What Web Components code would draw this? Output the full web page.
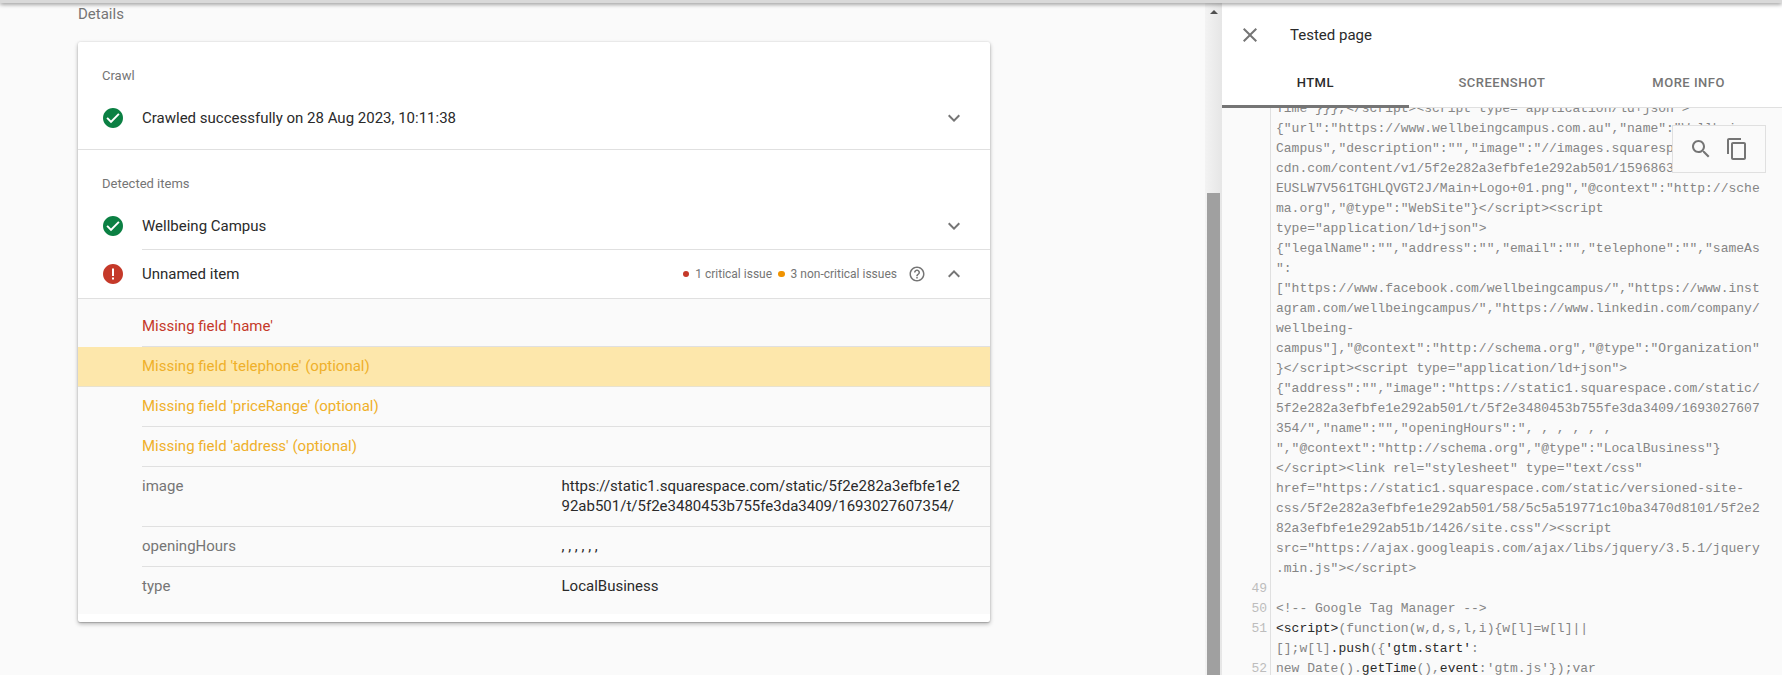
<!DOCTYPE html>
<html lang="en">
<head>
<meta charset="UTF-8">
<title>Tested page</title>
<style>
  html, body { margin: 0; height: 100%; overflow: hidden; }
  body { font-family: Roboto, "Liberation Sans", sans-serif; font-size: 15px; background: #fafafa; color: #2a2a2a; }
</style>
</head>
<body>

<result-app>
  <result-card slot="main">
    <card-section title="Crawl" divider>
      <status-row state="ok">Crawled successfully on 28 Aug 2023, 10:11:38</status-row>
    </card-section>
    <card-section title="Detected items">
      <status-row state="ok" inset>Wellbeing Campus</status-row>
      <status-row state="error" open>Unnamed item
        <issue-summary slot="meta"></issue-summary>
      </status-row>
    </card-section>
    <detail-list>
      <issue-row level="error" first>Missing field 'name'</issue-row>
      <issue-row level="warn" selected>Missing field 'telephone' (optional)</issue-row>
      <issue-row level="warn">Missing field 'priceRange' (optional)</issue-row>
      <issue-row level="warn">Missing field 'address' (optional)</issue-row>
      <detail-row label="image">https://static1.squarespace.com/static/5f2e282a3efbfe1e292ab501/t/5f2e3480453b755fe3da3409/1693027607354/</detail-row>
      <detail-row label="openingHours">, , , , , ,</detail-row>
      <detail-row label="type" last>LocalBusiness</detail-row>
    </detail-list>
  </result-card>
  <side-panel slot="side" heading="Tested page">
    <code-view></code-view>
  </side-panel>
</result-app>

<script>
  const ICONS = {
    down: '<path d="M7.41 8.59 12 13.17l4.59-4.58L18 10l-6 6-6-6z"/>',
    up: '<path d="M7.41 15.41 12 10.83l4.59 4.58L18 14l-6-6-6 6z"/>',
    close: '<path d="M19 6.41 17.59 5 12 10.59 6.41 5 5 6.41 10.59 12 5 17.59 6.41 19 12 13.41 17.59 19 19 17.59 13.41 12z"/>',
    search: '<path d="M15.5 14h-.79l-.28-.27C15.41 12.59 16 11.11 16 9.5 16 5.91 13.09 3 9.5 3S3 5.91 3 9.5 5.91 16 9.5 16c1.61 0 3.09-.59 4.23-1.57l.27.28v.79l5 4.99L20.49 19l-4.99-5zm-6 0C7.01 14 5 11.99 5 9.5S7.01 5 9.5 5 14 7.01 14 9.5 11.99 14 9.5 14z"/>',
    copy: '<path d="M16 1H4c-1.1 0-2 .9-2 2v14h2V3h12V1zm3 4H8c-1.1 0-2 .9-2 2v14c0 1.1.9 2 2 2h11c1.1 0 2-.9 2-2V7c0-1.1-.9-2-2-2zm0 16H8V7h11v14z"/>',
    help: '<path d="M11 18h2v-2h-2v2zm1-16C6.48 2 2 6.48 2 12s4.48 10 10 10 10-4.48 10-10S17.52 2 12 2zm0 18c-4.41 0-8-3.59-8-8s3.59-8 8-8 8 3.59 8 8-3.59 8-8 8zm0-14c-2.21 0-4 1.79-4 4h2c0-1.1.9-2 2-2s2 .9 2 2c0 2-3 1.75-3 5h2c0-2.25 3-2.5 3-5 0-2.21-1.79-4-4-4z"/>',
    ok: '<path fill="#0b8043" d="M12 2C6.48 2 2 6.48 2 12s4.48 10 10 10 10-4.48 10-10S17.52 2 12 2z"/><path fill="#fff" d="m10 17.2-4.6-4.6L6.8 11.2l3.2 3.2 7.2-7.2 1.4 1.4z"/>',
    error: '<path fill="#c53929" d="M12 2C6.48 2 2 6.48 2 12s4.48 10 10 10 10-4.48 10-10S17.52 2 12 2z"/><path fill="#fff" d="M11 6.5h2v7.5h-2zM11 15.5h2v2h-2z"/>'
  }

  function svg(name, size) {
    return `<svg width="${size}" height="${size}" viewBox="0 0 24 24" fill="#757575">${ICONS[name]}</svg>`
  }

  // small helper, every element below is just a shadow root with its own style
  function define(tag, render) {
    customElements.define(tag, class extends HTMLElement {
      connectedCallback() {
        if (this.shadowRoot) return
        this.attachShadow({ mode: 'open' }).innerHTML = render(this)
      }
    })
  }

  define('result-app', () => `
    <style>
      :host { display: flex; height: 675px; position: relative; overflow: hidden; }
      .top { position: absolute; left: 0; right: 0; top: 0; height: 3px; background: #d9d9d9; box-shadow: 0 1px 4px rgba(0,0,0,.55); z-index: 5; }
      main { width: 1205px; box-sizing: border-box; padding: 3px 0 0 78px; flex: none; }
      .title { height: 39px; font-size: 15px; line-height: 22px; color: #757575; }
      .bar { width: 17px; flex: none; box-sizing: border-box; padding: 3px 2px 0; display: flex; flex-direction: column; background: linear-gradient(90deg, #f3f3f3, #e6e6e6); }
      .arrow { height: 190px; display: flex; justify-content: center; padding-top: 6px; box-sizing: border-box; flex: none; }
      .arrow i { width: 0; height: 0; border: 4px solid transparent; border-top: 0; border-bottom: 4px solid #505050; margin-top: 1px; }
      .thumb { flex: 1; background: #a0a0a0; }
      .side { flex: 1; min-width: 0; }
    </style>
    <div class="top"></div>
    <main><div class="title">Details</div><slot name="main"></slot></main>
    <div class="bar"><div class="arrow"><i></i></div><div class="thumb"></div></div>
    <div class="side"><slot name="side"></slot></div>`)

  define('result-card', () => `
    <style>
      :host { display: block; width: 912px; height: 580px; background: #fff; border-radius: 2px; box-shadow: 0 1px 1px rgba(0,0,0,.14), 0 2px 4px rgba(0,0,0,.28), 0 0 2px rgba(0,0,0,.12); }
    </style><slot></slot>`)

  define('card-section', el => `
    <style>
      :host { display: block; ${el.hasAttribute('divider') ? 'border-bottom: 1px solid #e0e0e0;' : ''} }
      h3 { margin: 0; padding: 24px 0 0 24px; height: 20px; font: 400 13px/20px Roboto, sans-serif; color: #757575; }
    </style>
    <h3>${el.getAttribute('title')}</h3><slot></slot>`)

  define('status-row', el => {
    const open = el.hasAttribute('open'), inset = el.hasAttribute('inset')
    return `
    <style>
      :host { display: block; }
      .row { display: flex; align-items: center; box-sizing: border-box; height: ${open ? 49 : inset ? 55 : 63}px; padding-top: ${inset ? 9 : 0}px; ${open ? 'border-bottom: 1px solid #e0e0e0;' : ''} }
      .ic { width: 24px; height: 24px; margin-left: 23px; margin-right: 17px; flex: none; }
      .body { flex: 1; display: flex; align-items: center; align-self: stretch; line-height: 20px; color: #2a2a2a; }
      .meta { margin-left: auto; display: flex; }
      .chev { width: 24px; height: 24px; margin: 0 24px 0 16px; flex: none; }
      .rule { height: 1px; background: #e0e0e0; margin-left: 64px; }
      svg { display: block; }
    </style>
    <div class="row">
      <div class="ic">${svg(el.getAttribute('state'), 24)}</div>
      <div class="body"><slot></slot><div class="meta"><slot name="meta"></slot></div></div>
      <div class="chev">${svg(open ? 'up' : 'down', 24)}</div>
    </div>${inset ? '<div class="rule"></div>' : ''}`
  })

  define('issue-summary', () => `
    <style>
      :host { display: flex; align-items: center; font-size: 12px; color: #757575; }
      i { width: 6.5px; height: 6.5px; border-radius: 50%; margin-right: 6px; }
      span { margin-right: 6px; }
      span:last-of-type { margin-right: 11px; }
      svg { display: block; }
    </style>
    <i style="background:#c53929"></i><span>1 critical issue</span>
    <i style="background:#f09300"></i><span>3 non-critical issues</span>
    ${svg('help', 18)}`)

  define('detail-list', () => `
    <style>:host { display: block; background: #fafafa; height: 315px; }</style><slot></slot>`)

  define('issue-row', el => {
    const colour = el.getAttribute('level') === 'error' ? '#c53929' : '#efb02a'
    const selected = el.hasAttribute('selected')
    return `
    <style>
      :host { display: block; padding-left: ${selected ? 0 : 64}px; background: ${selected ? '#fde7ab' : 'none'}; }
      div { height: 39px; line-height: 39px; border-bottom: 1px solid #e0e0e0; color: ${colour}; ${el.hasAttribute('first') ? 'padding-top: 8px;' : ''} ${selected ? 'padding-left: 64px; border-color: #e8e2cf;' : ''} }
    </style><div><slot></slot></div>`
  })

  define('detail-row', el => `
    <style>
      :host { display: block; padding-left: 64px; }
      .row { display: grid; grid-template-columns: 419.5px 1fr; padding: 9px 0 10px; line-height: 20px; ${el.hasAttribute('last') ? '' : 'border-bottom: 1px solid #e0e0e0;'} }
      .label { color: #757575; }
      .value { color: #2a2a2a; width: 399px; word-break: break-all; }
    </style>
    <div class="row"><div class="label">${el.getAttribute('label')}</div><div class="value"><slot></slot></div></div>`)

  define('side-panel', el => `
    <style>
      :host { display: flex; flex-direction: column; height: 675px; background: #fff; }
      header { display: flex; align-items: center; height: 64px; padding-top: 5px; box-sizing: border-box; flex: none; }
      .x { width: 24px; height: 24px; margin-left: 16px; margin-right: 28px; }
      .x svg { display: block; }
      h2 { margin: 0; font: 400 15px/20px Roboto, sans-serif; color: #2a2a2a; }
      .tabs { display: grid; grid-template-columns: repeat(3, 1fr); height: 44px; flex: none; border-bottom: 1px solid #e0e0e0; box-sizing: border-box; }
      .tab { display: flex; align-items: center; justify-content: center; font: 500 13px Roboto, sans-serif; letter-spacing: .5px; color: #757575; padding-bottom: 7px; margin-bottom: -1px; }
      .tab.on { color: #2a2a2a; border-bottom: 3px solid #757575; padding-bottom: 4px; }
      .code { flex: 1; min-height: 0; position: relative; background: #fafafa; overflow: hidden; }
    </style>
    <header><div class="x">${svg('close', 24)}</div><h2>${el.getAttribute('heading')}</h2></header>
    <div class="tabs"><div class="tab on">HTML</div><div class="tab">SCREENSHOT</div><div class="tab">MORE INFO</div></div>
    <div class="code"><slot></slot></div>`)

  const CODE = [
    ['', 'Time"}}},<\/script><script type="application/ld+json">'],
    ['', '{"url":"https://www.wellbeingcampus.com.au","name":"Wellbeing'],
    ['', 'Campus","description":"","image":"//images.squarespace-'],
    ['', 'cdn.com/content/v1/5f2e282a3efbfe1e292ab501/1596863492116-'],
    ['', 'EUSLW7V561TGHLQVGT2J/Main+Logo+01.png","@context":"http://sche'],
    ['', 'ma.org","@type":"WebSite"}<\/script><script'],
    ['', 'type="application/ld+json">'],
    ['', '{"legalName":"","address":"","email":"","telephone":"","sameAs'],
    ['', '":'],
    ['', '["https://www.facebook.com/wellbeingcampus/","https://www.inst'],
    ['', 'agram.com/wellbeingcampus/","https://www.linkedin.com/company/'],
    ['', 'wellbeing-'],
    ['', 'campus"],"@context":"http://schema.org","@type":"Organization"'],
    ['', '}<\/script><script type="application/ld+json">'],
    ['', '{"address":"","image":"https://static1.squarespace.com/static/'],
    ['', '5f2e282a3efbfe1e292ab501/t/5f2e3480453b755fe3da3409/1693027607'],
    ['', '354/","name":"","openingHours":", , , , , , '],
    ['', '","@context":"http://schema.org","@type":"LocalBusiness"}'],
    ['', '<\/script><link rel="stylesheet" type="text/css"'],
    ['', 'href="https://static1.squarespace.com/static/versioned-site-'],
    ['', 'css/5f2e282a3efbfe1e292ab501/58/5c5a519771c10ba3470d8101/5f2e2'],
    ['', '82a3efbfe1e292ab51b/1426/site.css"/><script'],
    ['', 'src="https://ajax.googleapis.com/ajax/libs/jquery/3.5.1/jquery'],
    ['', '.min.js"><\/script>'],
    ['49', ''],
    ['50', '\x3c!-- Google Tag Manager --\x3e'],
    ['51', '**\x3cscript>**(function(w,d,s,l,i){w[l]=w[l]||'],
    ['', '[];w[l]**.push**({**\'gtm.start\'**:'],
    ['52', 'new Date().**getTime**(),**event**:\'gtm.js\'});var']
  ]

  function esc(s) {
    return s.replace(/&/g, '&amp;').replace(/</g, '&lt;')
  }

  define('code-view', () => `
    <style>
      :host { display: block; }
      .lines { margin-top: -9px; font: 13px/20px "Liberation Mono", monospace; color: #858585; }
      .line { display: flex; height: 20px; }
      .no { width: 49px; flex: none; text-align: right; padding-right: 3px; box-sizing: border-box; color: #bdbdbd; border-right: 1px solid #e0e0e0; }
      .txt { padding-left: 5px; white-space: pre; }
      b { color: #2a2a2a; font-weight: 400; }
      .tools { position: absolute; left: 450px; top: 17px; width: 94px; height: 48px; box-sizing: border-box; display: flex; align-items: center; padding-left: 16px; gap: 12px; background: #fafafa; border: 1px solid #e0e0e0; }
      .tools svg { display: block; }
    </style>
    <div class="lines">${CODE.map(([no, txt]) => `<div class="line"><div class="no">${no}</div><div class="txt">${esc(txt).replace(/\*\*(.+?)\*\*/g, '<b>$1</b>')}</div></div>`).join('')}</div>
    <div class="tools">${svg('search', 24)}${svg('copy', 24)}</div>`)
</script>
</body>
</html>
